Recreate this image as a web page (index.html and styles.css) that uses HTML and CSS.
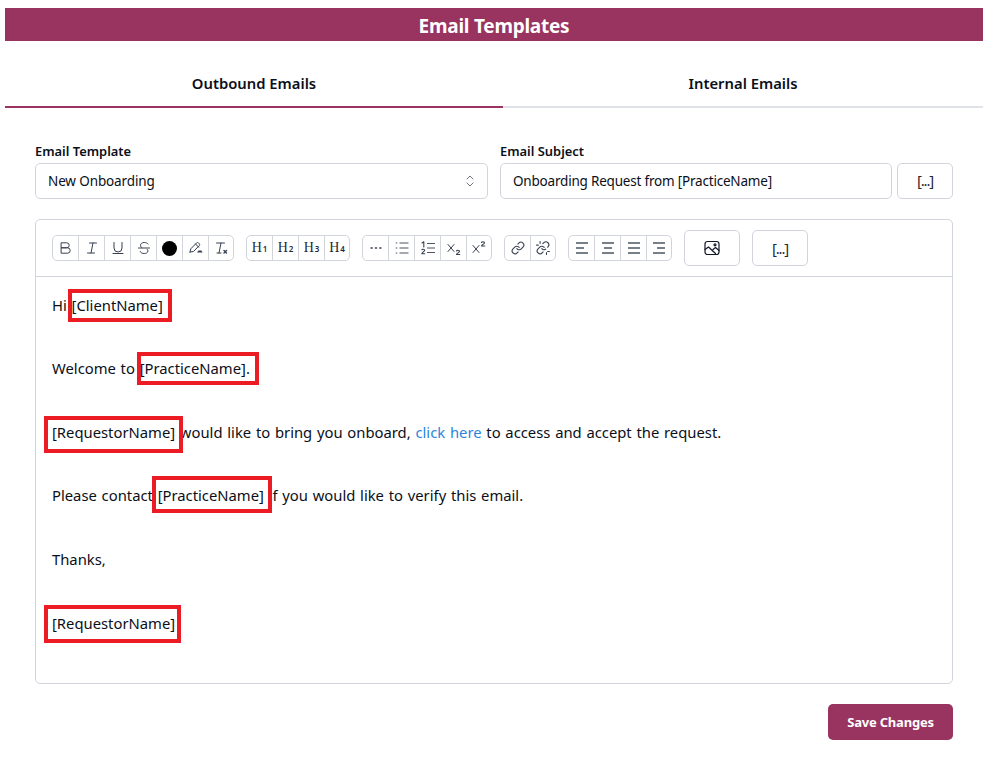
FILE: index.html
```html
<!DOCTYPE html>
<html lang="en">
<head>
<meta charset="utf-8">
<title>Email Templates</title>
<link rel="stylesheet" href="styles.css">
</head>
<body>
<header class="banner">Email Templates</header>
<nav class="tabs">
  <div class="tab tab-active">Outbound Emails</div>
  <div class="tab tab-idle">Internal Emails</div>
</nav>
<main class="panel">
  <div class="fields">
    <div class="field field-template">
      <label class="label">Email Template</label>
      <div class="control select">
        <span>New Onboarding</span>
        <svg class="updown" width="10" height="14" viewBox="0 0 10 14" fill="none" stroke="#6b7280" stroke-width="1" stroke-linecap="round" stroke-linejoin="round"><path d="M2 5l3-3 3 3"/><path d="M2 9l3 3 3-3"/></svg>
      </div>
    </div>
    <div class="field field-subject">
      <label class="label">Email Subject</label>
      <div class="subject-row">
        <div class="control subject">Onboarding Request from [PracticeName]</div>
        <button class="bracket-btn small-btn">[...]</button>
      </div>
    </div>
  </div>

  <section class="editor">
    <div class="toolbar">
      <div class="group">
        <span class="tool"><svg viewBox="0 0 14 14"><path d="M2.500 1.800h5.200a2.500 2.500 0 0 1 0 5H2.500zM2.500 6.800h6a2.700 2.700 0 0 1 0 5.400h-6z"/></svg></span>
        <span class="tool"><svg viewBox="0 0 14 14"><path d="M4.500 2h7M2.500 12h7M8 2l-2 10"/></svg></span>
        <span class="tool"><svg viewBox="0 0 14 14"><path d="M3 1.500v5.500a4 4 0 0 0 8 0V1.500M2 12.500h10"/></svg></span>
        <span class="tool"><svg viewBox="0 0 14 14"><path d="M11 3C10.400 2 9 1.500 7.300 1.500 5 1.500 3.500 2.700 3.500 4.300c0 .9.400 1.700 1.300 2.300M1.500 7h11M10.300 8.500c.4.500.6 1 .6 1.600 0 1.500-1.600 2.400-3.700 2.400-2 0-3.500-.7-4-2"/></svg></span>
        <span class="tool"><span class="swatch"></span></span>
        <span class="tool"><svg viewBox="0 0 14 14"><path d="M1 11l.8-3.200 5.700-5.800a1.500 1.500 0 0 1 2.100 0l.6.600a1.500 1.500 0 0 1 0 2.100L4.500 10.500 1 11zM6.500 3l3.300 3.300"/><path class="filled" d="M9.500 9.500h3l1 2h-5.500z"/></svg></span>
        <span class="tool"><svg viewBox="0 0 14 14"><path d="M2.500 2h8M7 2L5 12M3 12h4"/><path class="thick" d="M10 9.500l2.500 2.500M12.500 9.500L10 12"/></svg></span>
      </div>
      <div class="group">
        <span class="tool heading">H<sub>1</sub></span>
        <span class="tool heading">H<sub>2</sub></span>
        <span class="tool heading">H<sub>3</sub></span>
        <span class="tool heading">H<sub>4</sub></span>
      </div>
      <div class="group">
        <span class="tool"><svg viewBox="0 0 14 14"><path class="thick" d="M2 7h1.200M6.400 7h1.200M10.800 7H12"/></svg></span>
        <span class="tool"><svg viewBox="0 0 14 14"><path class="bar light" d="M4.500 2h9M4.500 7h9M4.500 12h9"/><path class="bar light" d="M.8 2h1.500M.8 7h1.500M.8 12h1.500"/></svg></span>
        <span class="tool"><svg viewBox="0 0 14 14"><path class="bar light" d="M6 2.500h8M6 7h8M6 11.500h8"/><path class="thin" d="M1 2l1.800-1.200V6M.8 8.800c.4-.8 2.800-.9 2.800.5 0 1.200-2.800 2-2.800 3.500h3"/></svg></span>
        <span class="tool"><svg viewBox="0 0 14 14"><path d="M1 3.500l6 7M7 3.500l-6 7"/><path class="thin" d="M9.500 10c.3-1 3-1 3 .3 0 1.200-3 2-3 3.200h3.300"/></svg></span>
        <span class="tool"><svg viewBox="0 0 14 14"><path d="M1 4.500l6 7M7 4.500l-6 7"/><path class="thin" d="M9.500 1.500c.3-1 3-1 3 .3 0 1.200-3 2-3 3.200h3.300"/></svg></span>
      </div>
      <div class="group">
        <span class="tool"><svg viewBox="0 0 24 24" class="chain"><path d="M10 13a5 5 0 0 0 7.540.54l3-3a5 5 0 0 0-7.070-7.070l-1.720 1.710"/><path d="M14 11a5 5 0 0 0-7.540-.54l-3 3a5 5 0 0 0 7.070 7.070l1.710-1.710"/></svg></span>
        <span class="tool"><svg viewBox="0 0 24 24" class="chain"><path d="M10 13a5 5 0 0 0 6.500 1M20 10.500l.5-.5a5 5 0 0 0-7.070-7.070l-1.720 1.710"/><path d="M14 11a5 5 0 0 0-7.540-.54l-3 3a5 5 0 0 0 7.070 7.070l1.710-1.710"/><path d="M7 1v3M1 7h3M18 20v3M20 18h3"/></svg></span>
      </div>
      <div class="group">
        <span class="tool"><svg viewBox="0 0 14 14"><path class="bar" d="M1 2h12M1 7h8M1 12h12"/></svg></span>
        <span class="tool"><svg viewBox="0 0 14 14"><path class="bar" d="M1 2h12M3 7h8M1 12h12"/></svg></span>
        <span class="tool"><svg viewBox="0 0 14 14"><path class="bar" d="M1 2h12M1 7h12M1 12h12"/></svg></span>
        <span class="tool"><svg viewBox="0 0 14 14"><path class="bar" d="M1 2h12M5 7h8M1 12h12"/></svg></span>
      </div>
      <button class="big-btn"><svg class="image-icon" width="16" height="16" viewBox="0 0 16 16"><rect x="1" y="1.500" width="14" height="13" rx="2.500"/><path d="M1 9.500l3.500-2.500 7 6.500M9 9.500l2.500-2 3.500 3"/><circle cx="11" cy="4.800" r="1"/></svg></button>
      <button class="big-btn bracket-btn">[...]</button>
    </div>
    <div class="body">
      <p>Hi <span class="mark mark-client">[ClientName]</span></p>
      <p>Welcome to <span class="mark mark-practice">[PracticeName].</span></p>
      <p><span class="mark mark-req-a">[RequestorName]</span> would like to bring you onboard, <a class="link">click here</a> to access and accept the request.</p>
      <p>Please contact <span class="mark mark-contact">[PracticeName]</span> if you would like to verify this email.</p>
      <p>Thanks,</p>
      <p><span class="mark mark-req-b">[RequestorName]</span></p>
    </div>
  </section>

  <div class="actions"><button class="save">Save Changes</button></div>
</main>
</body>
</html>
```

FILE: styles.css
```css
* { box-sizing: border-box; }
html, body { margin: 0; padding: 0; background: #fff; }
body {
  font-family: "Noto Sans", "Open Sans", sans-serif;
  color: #0b0f19;
  width: 986px;
  height: 766px;
  overflow: hidden;
  padding: 8px 3px 0 5px;
}
.banner {
  height: 33px;
  background: #993360;
  color: #fff;
  font-size: 19px;
  font-weight: 700;
  line-height: 36px;
  text-align: center;
  letter-spacing: -0.25px;
}
.tabs { display: flex; height: 67px; }
.tab {
  font-size: 14.800px;
  font-weight: 600;
  text-align: center;
  line-height: 85px;
}
.tab-active { width: 498px; border-bottom: 2px solid #993360; }
.tab-idle { width: 480px; border-bottom: 2px solid #dfe2e6; }
.panel { padding: 35px 30px 0; }
.fields { display: flex; gap: 12px; }
.field-template { width: 453px; }
.field-subject { width: 453px; }
.label {
  display: block;
  font-size: 12.900px;
  font-weight: 600;
  line-height: 16px;
  margin-bottom: 4px;
}
.control {
  height: 36px;
  border: 1px solid #d1d5db;
  border-radius: 5px;
  font-size: 13.500px;
  line-height: 34px;
  padding-left: 12px;
  letter-spacing: -0.12px;
}
.select { display: flex; justify-content: space-between; align-items: center; padding-right: 12px; }
.subject-row { display: flex; gap: 5px; }
.subject { width: 392px; letter-spacing: -0.2px; }
button { font-family: inherit; background: #fff; cursor: pointer; color: #1f2937; }
.bracket-btn { font-size: 15px; font-weight: 400; letter-spacing: -1.2px; line-height: 1; padding-bottom: 2px; }
.small-btn {
  width: 56px;
  height: 36px;
  border: 1px solid #d1d5db;
  border-radius: 5px;
  padding: 0 0 2px;
}
.editor {
  margin-top: 20px;
  height: 465px;
  border: 1px solid #d1d5db;
  border-radius: 5px;
}
.toolbar {
  height: 57px;
  border-bottom: 1px solid #d1d5db;
  display: flex;
  align-items: center;
  gap: 12px;
  padding: 0 16px;
}
.group {
  display: flex;
  height: 26px;
  border: 1px solid #d1d5db;
  border-radius: 5px;
  margin: 0;
}
.tool {
  width: 26px;
  display: flex;
  align-items: center;
  justify-content: center;
  border-right: 1px solid #d1d5db;
  color: #374151;
}
.tool:first-child { width: 26px; }
.tool:last-child { border-right: 0; width: 24px; }
.tool svg { width: 14px; height: 14px; fill: none; stroke: #374151; stroke-width: 1; stroke-linecap: round; stroke-linejoin: round; }
.tool svg .thick { stroke-width: 1.400; }
.tool svg .thin { stroke-width: 1.100; }
.tool svg .filled { fill: #374151; stroke: none; }
.tool svg .bar { stroke-width: 1.400; stroke: #4b5563; stroke-linecap: butt; }
.tool svg .bar.light { stroke-width: 1.100; stroke: #4b5563; }
.tool svg.chain { stroke-width: 1.900; stroke: #374151; }
.swatch { width: 15px; height: 15px; border-radius: 50%; background: #000; }
.heading { font-family: "Liberation Serif", serif; font-size: 14px; color: #1f2937; }
.heading sub { font-family: "Noto Sans", sans-serif; font-size: 8px; font-weight: 600; vertical-align: baseline; margin-left: 1px; }
.big-btn {
  width: 56px;
  height: 36px;
  border: 1px solid #d1d5db;
  border-radius: 5px;
  padding: 0;
  display: flex;
  align-items: center;
  justify-content: center;
}
.image-icon { fill: none; stroke: #111827; stroke-width: 1.200; stroke-linejoin: round; stroke-linecap: round; }
.body { padding: 15.700px 16px 0; display: flex; flex-direction: column; gap: 39.600px; }
.body p { margin: 0; font-size: 14.800px; line-height: 24px; word-spacing: 0.9px; }
.link { color: #2b85dc; }
.mark { position: relative; }
.mark::after { content: ""; position: absolute; border: 4px solid #ec1c24; pointer-events: none; }
.mark-client::after { left: -4px; right: -9px; top: -6px; bottom: -7px; }
.mark-practice::after { left: -3px; right: -9px; top: -6px; bottom: -7px; }
.mark-req-a::after { left: -8px; right: -8px; top: -6px; bottom: -11px; }
.mark-contact::after { left: -6px; right: -8px; top: -9px; bottom: -8px; }
.mark-req-b::after { left: -8px; right: -6px; top: -8px; bottom: -10px; }
.actions { display: flex; justify-content: flex-end; margin-top: 20px; }
.save {
  width: 125px;
  height: 36px;
  border: 0;
  border-radius: 5px;
  background: #993360;
  color: #fff;
  font-size: 13px;
  font-weight: 700;
  letter-spacing: -0.2px;
}
```
